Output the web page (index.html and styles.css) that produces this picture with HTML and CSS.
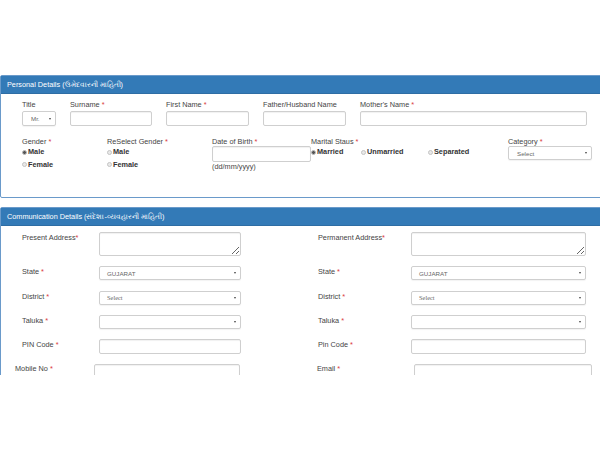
FILE: index.html
```html
<!DOCTYPE html>
<html lang="en">
<head>
<meta charset="utf-8">
<title>Application Form</title>
<link rel="stylesheet" href="styles.css">
</head>
<body>
<div class="page">
  <section class="panel panel-personal">
    <div class="panel-heading">Personal Details (ઉમેદવારની માહિતી)</div>
    <div class="panel-body">
      <div class="row-names">
        <div class="field">
          <label class="lbl">Title</label>
          <span class="select select-title"><span class="sel-text">Mr.</span></span>
        </div>
        <div class="field">
          <label class="lbl">Surname <span class="req">*</span></label>
          <input class="input" type="text">
        </div>
        <div class="field">
          <label class="lbl">First Name <span class="req">*</span></label>
          <input class="input" type="text">
        </div>
        <div class="field">
          <label class="lbl">Father/Husband Name</label>
          <input class="input" type="text">
        </div>
        <div class="field">
          <label class="lbl">Mother's Name <span class="req">*</span></label>
          <input class="input" type="text">
        </div>
      </div>
      <div class="row-info">
        <div class="field">
          <label class="lbl">Gender <span class="req">*</span></label>
          <div class="radios-stack">
            <span class="radio-opt"><span class="radio checked"></span>Male</span>
            <span class="radio-opt"><span class="radio"></span>Female</span>
          </div>
        </div>
        <div class="field">
          <label class="lbl">ReSelect Gender <span class="req">*</span></label>
          <div class="radios-stack">
            <span class="radio-opt"><span class="radio"></span>Male</span>
            <span class="radio-opt"><span class="radio"></span>Female</span>
          </div>
        </div>
        <div class="field">
          <label class="lbl">Date of Birth <span class="req">*</span></label>
          <input class="input input-dob" type="text">
          <span class="hint">(dd/mm/yyyy)</span>
        </div>
        <div class="field">
          <label class="lbl">Marital Staus <span class="req">*</span></label>
          <div class="radios-inline">
            <span class="radio-opt opt-married"><span class="radio checked"></span>Married</span>
            <span class="radio-opt opt-unmarried"><span class="radio"></span>Unmarried</span>
            <span class="radio-opt"><span class="radio"></span>Separated</span>
          </div>
        </div>
        <div class="field">
          <label class="lbl">Category <span class="req">*</span></label>
          <span class="select select-cat"><span class="sel-text">Select</span></span>
        </div>
      </div>
    </div>
  </section>

  <section class="panel panel-comm">
    <div class="panel-heading">Communication Details (સંદેશા-વ્યવહારની માહિતી)</div>
    <div class="panel-body comm-body">
      <div class="comm-row">
        <label class="lbl">Present Address<span class="req">*</span></label>
        <textarea class="textarea"></textarea>
        <span></span>
        <label class="lbl">Permanent Address<span class="req">*</span></label>
        <textarea class="textarea"></textarea>
      </div>
      <div class="comm-row">
        <label class="lbl">State <span class="req">*</span></label>
        <span class="select"><span class="sel-text">GUJARAT</span></span>
        <span></span>
        <label class="lbl">State <span class="req">*</span></label>
        <span class="select"><span class="sel-text">GUJARAT</span></span>
      </div>
      <div class="comm-row">
        <label class="lbl">District <span class="req">*</span></label>
        <span class="select"><span class="sel-text serif">Select</span></span>
        <span></span>
        <label class="lbl">District <span class="req">*</span></label>
        <span class="select"><span class="sel-text serif">Select</span></span>
      </div>
      <div class="comm-row">
        <label class="lbl">Taluka <span class="req">*</span></label>
        <span class="select"><span class="sel-text"></span></span>
        <span></span>
        <label class="lbl">Taluka <span class="req">*</span></label>
        <span class="select"><span class="sel-text"></span></span>
      </div>
      <div class="comm-row">
        <label class="lbl">PIN Code <span class="req">*</span></label>
        <input class="input" type="text">
        <span></span>
        <label class="lbl">Pin Code <span class="req">*</span></label>
        <input class="input" type="text">
      </div>
      <div class="comm-row comm-row-contact">
        <label class="lbl">Mobile No <span class="req">*</span></label>
        <input class="input input-tall" type="text">
        <span></span>
        <label class="lbl">Email <span class="req">*</span></label>
        <input class="input input-tall" type="text">
      </div>
    </div>
  </section>
</div>
</body>
</html>
```

FILE: styles.css
```css
html, body {
  margin: 0;
  padding: 0;
  background: #ffffff;
}

body {
  font-family: "Liberation Sans", Arial, sans-serif;
  font-size: 7.3px;
  color: #444444;
}

.page {
  width: 600px;
  height: 375px;
  overflow: hidden;
  padding-top: 75px;
  box-sizing: border-box;
}

.panel {
  width: 612px;
  box-sizing: border-box;
  border: 1px solid #6a9aca;
  border-radius: 2px;
  background: #ffffff;
}

.panel-personal {
  height: 123px;
}

.panel-comm {
  margin-top: 9px;
  height: 220px;
}

.panel-heading {
  height: 17px;
  line-height: 17px;
  background: #337ab7;
  color: #ffffff;
  padding-left: 6px;
  font-size: 7.3px;
  border-bottom: 1px solid #2e6da4;
  white-space: nowrap;
}

.panel-body {
  padding-left: 21px;
}

.lbl {
  display: block;
  line-height: 9px;
  height: 9px;
  color: #444444;
  white-space: nowrap;
}

.req {
  color: #d9383a;
}

.input {
  display: block;
  box-sizing: border-box;
  height: 15px;
  margin: 0;
  padding: 0 4px;
  border: 1px solid #cfcfcf;
  border-radius: 2px;
  box-shadow: inset 0 1px 1px rgba(0, 0, 0, 0.06);
  background: #ffffff;
  font: inherit;
  width: 100%;
}

.textarea {
  display: block;
  box-sizing: border-box;
  width: 100%;
  height: 24px;
  margin: 0;
  padding: 0;
  border: 1px solid #cfcfcf;
  border-radius: 2px;
  box-shadow: inset 0 1px 1px rgba(0, 0, 0, 0.06);
  resize: vertical;
  font: inherit;
}

.select {
  position: relative;
  display: flex;
  align-items: center;
  box-sizing: border-box;
  height: 14px;
  border: 1px solid #cfcfcf;
  border-radius: 2px;
  box-shadow: 0 1px 1px rgba(0, 0, 0, 0.05);
  background: #ffffff;
  padding-left: 7px;
}

.select::after {
  content: "";
  position: absolute;
  right: 4px;
  top: 5px;
  width: 0;
  height: 0;
  border-left: 1.5px solid transparent;
  border-right: 1.5px solid transparent;
  border-top: 2.5px solid #444444;
}

.sel-text {
  font-size: 6.2px;
  color: #666666;
}

.sel-text.serif {
  font-family: "Liberation Serif", "Times New Roman", serif;
  font-size: 6.4px;
}

/* Personal details rows */
.row-names {
  display: grid;
  grid-template-columns: 34px 82px 83px 83px 227px;
  column-gap: 14px;
  padding-top: 6px;
}

.row-names .lbl {
  margin-bottom: 2px;
}

.select-title {
  height: 15px;
  padding-left: 8px;
}

.select-title::after {
  right: 4px;
  top: 5.5px;
}

.row-info {
  display: grid;
  grid-template-columns: 85px 105px 99px 197px 84px;
  margin-top: 11px;
}

.radios-stack {
  display: flex;
  flex-direction: column;
}

.radios-stack .radio-opt {
  line-height: 13px;
}

.radios-stack .radio-opt:first-child {
  line-height: 12px;
}

.radio-opt {
  display: flex;
  align-items: center;
  font-weight: bold;
  color: #333333;
  white-space: nowrap;
}

.radio {
  display: inline-block;
  box-sizing: border-box;
  width: 5px;
  height: 5px;
  margin-right: 1px;
  border-radius: 50%;
  border: 1px solid #c4c4c4;
  background: #e8e8e8;
}

.radio.checked {
  background: #555555;
  border-color: #bdbdbd;
}

.radios-inline {
  display: flex;
  line-height: 12px;
}

.opt-married {
  width: 50px;
}

.opt-unmarried {
  width: 67px;
}

.input-dob {
  height: 16px;
}

.hint {
  display: block;
  line-height: 10px;
  color: #444444;
}

.select-cat {
  height: 14px;
  padding-left: 8px;
}

/* Communication details */
.comm-body {
  padding-top: 6px;
  display: flex;
  flex-direction: column;
  row-gap: 10.3px;
}

.comm-row {
  display: grid;
  grid-template-columns: 77px 142px 77px 93px 175px;
  align-items: start;
}

.comm-row .lbl {
  padding-top: 1px;
}

.comm-row-contact {
  margin-left: -7px;
  grid-template-columns: 79px 146px 77px 97px 178px;
}

.comm-row-contact .lbl {
  padding-top: 0;
}

.input-tall {
  height: 18px;
}
```
